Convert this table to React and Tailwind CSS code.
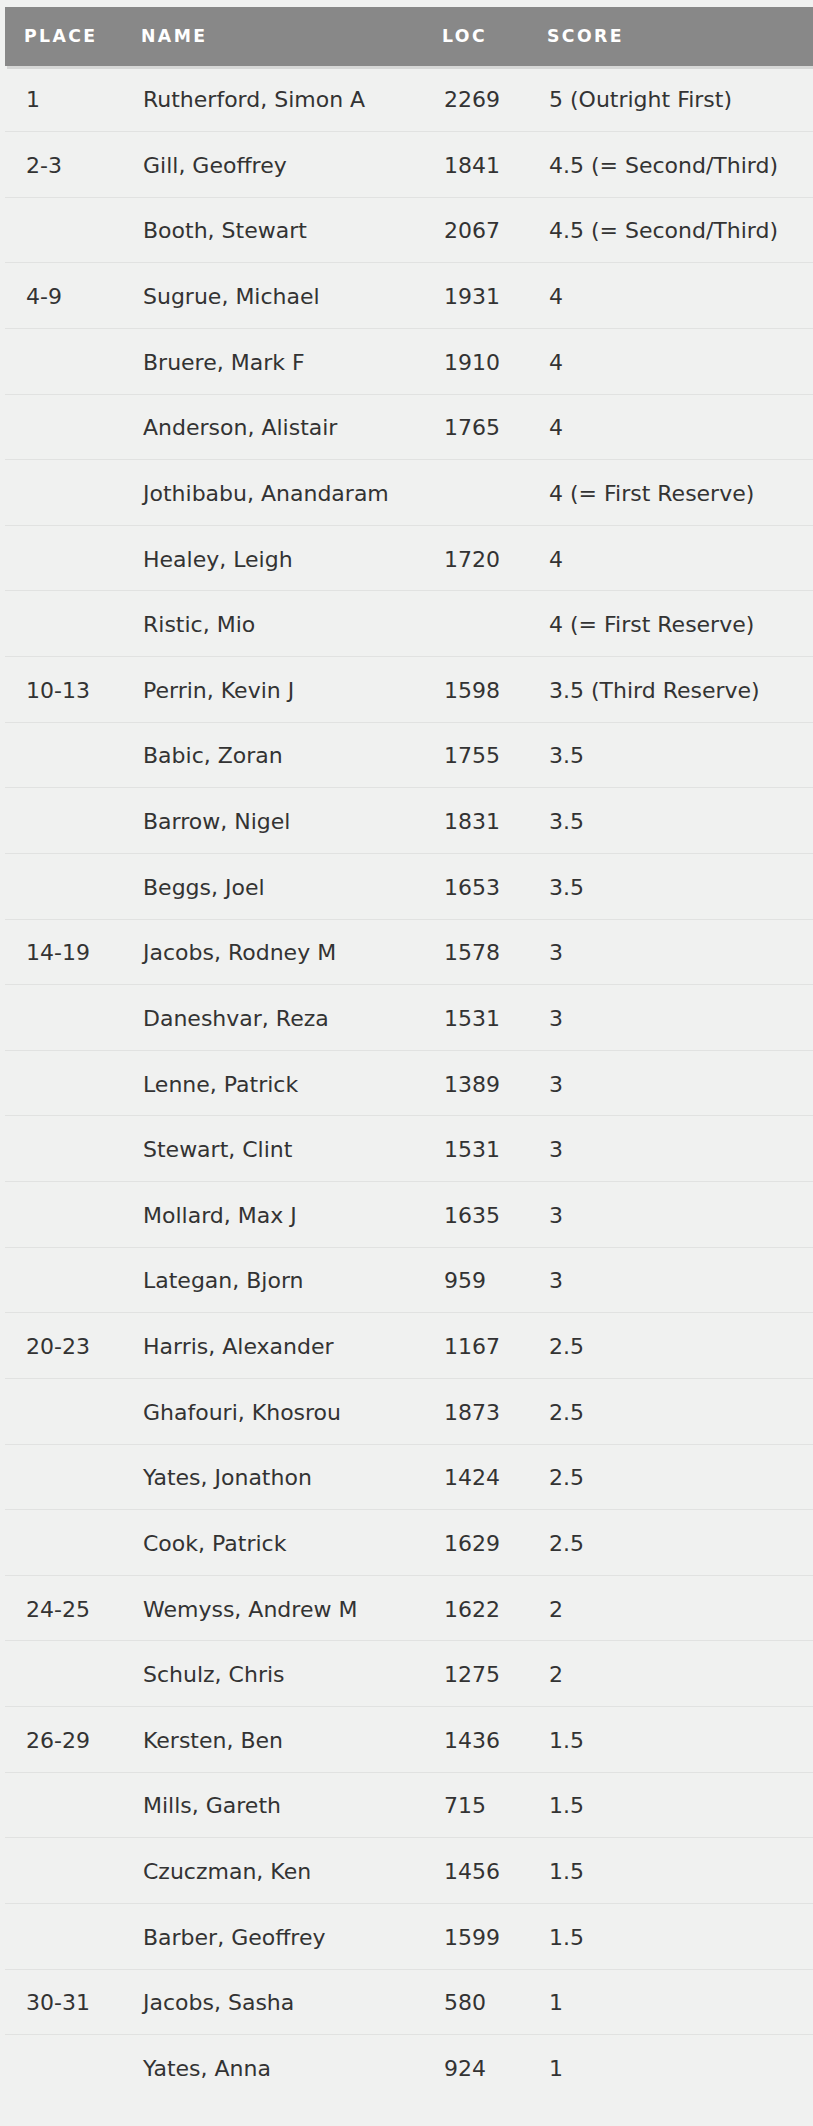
const rows = [
  ["1", "Rutherford, Simon A", "2269", "5 (Outright First)"],
  ["2-3", "Gill, Geoffrey", "1841", "4.5 (= Second/Third)"],
  ["", "Booth, Stewart", "2067", "4.5 (= Second/Third)"],
  ["4-9", "Sugrue, Michael", "1931", "4"],
  ["", "Bruere, Mark F", "1910", "4"],
  ["", "Anderson, Alistair", "1765", "4"],
  ["", "Jothibabu, Anandaram", "", "4 (= First Reserve)"],
  ["", "Healey, Leigh", "1720", "4"],
  ["", "Ristic, Mio", "", "4 (= First Reserve)"],
  ["10-13", "Perrin, Kevin J", "1598", "3.5 (Third Reserve)"],
  ["", "Babic, Zoran", "1755", "3.5"],
  ["", "Barrow, Nigel", "1831", "3.5"],
  ["", "Beggs, Joel", "1653", "3.5"],
  ["14-19", "Jacobs, Rodney M", "1578", "3"],
  ["", "Daneshvar, Reza", "1531", "3"],
  ["", "Lenne, Patrick", "1389", "3"],
  ["", "Stewart, Clint", "1531", "3"],
  ["", "Mollard, Max J", "1635", "3"],
  ["", "Lategan, Bjorn", "959", "3"],
  ["20-23", "Harris, Alexander", "1167", "2.5"],
  ["", "Ghafouri, Khosrou", "1873", "2.5"],
  ["", "Yates, Jonathon", "1424", "2.5"],
  ["", "Cook, Patrick", "1629", "2.5"],
  ["24-25", "Wemyss, Andrew M", "1622", "2"],
  ["", "Schulz, Chris", "1275", "2"],
  ["26-29", "Kersten, Ben", "1436", "1.5"],
  ["", "Mills, Gareth", "715", "1.5"],
  ["", "Czuczman, Ken", "1456", "1.5"],
  ["", "Barber, Geoffrey", "1599", "1.5"],
  ["30-31", "Jacobs, Sasha", "580", "1"],
  ["", "Yates, Anna", "924", "1"],
];

export default function App() {
  return (
    <div className="min-h-[2126px] bg-[#f0f1f0] pt-[7px] pb-[25px] pl-[5px] font-['DejaVu_Sans',Verdana,sans-serif]">
      <div className="grid grid-cols-[117px_301px_105px_1fr] h-[59.4px] items-center bg-[#888888] shadow-[2px_3px_0_#d6d7d6] text-white font-bold text-[17.3px] tracking-[2.4px]">
        <div className="pl-[19px]">PLACE</div>
        <div className="pl-[19px]">NAME</div>
        <div className="pl-[19px]">LOC</div>
        <div className="pl-[19px]">SCORE</div>
      </div>
      <div className="text-[#333333] text-[22px]">
        {rows.map((r, i) => (
          <div
            key={i}
            className={
              "grid grid-cols-[117px_301px_105px_1fr] h-[65.63px] items-center pt-[2px] " +
              (i < rows.length - 1 ? "border-b border-[#e1e2e1]" : "")
            }
          >
            <div className="pl-[21px] whitespace-nowrap">{r[0]}</div>
            <div className="pl-[21px] whitespace-nowrap">{r[1]}</div>
            <div className="pl-[21px] whitespace-nowrap">{r[2]}</div>
            <div className="pl-[21px] whitespace-nowrap">{r[3]}</div>
          </div>
        ))}
      </div>
    </div>
  );
}
